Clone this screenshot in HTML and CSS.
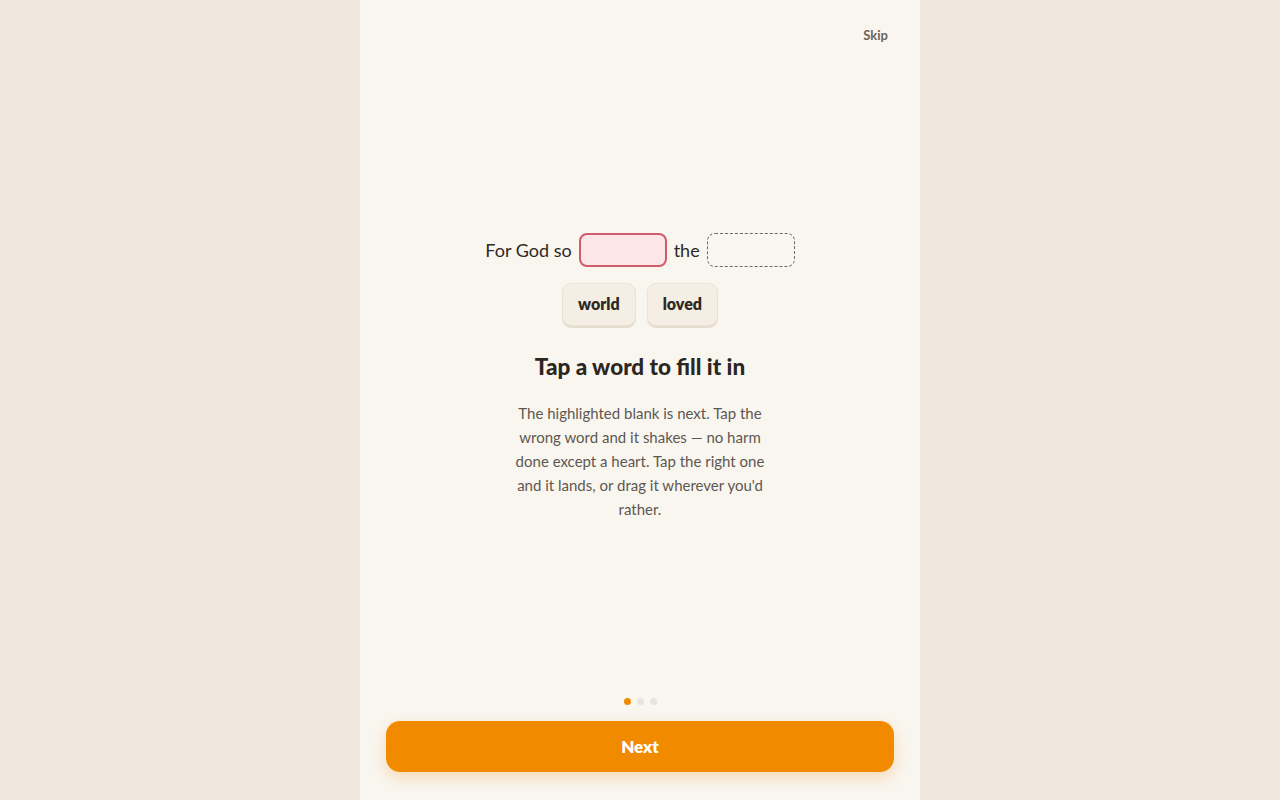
FILE: index.html
```html
<!DOCTYPE html>
<html lang="en">
<head>
<meta charset="utf-8">
<link rel="stylesheet" href="styles.css">
</head>
<body>
<div class="screen">
  <div class="top">
    <button class="skip">Skip</button>
  </div>
  <div class="content">
    <div class="sentence">
      <span class="word">For God so</span>
      <span class="blank active"></span>
      <span class="word">the</span>
      <span class="blank"></span>
    </div>
    <div class="chips">
      <button class="chip">world</button>
      <button class="chip">loved</button>
    </div>
    <h1 class="title">Tap a word to fill it in</h1>
    <p class="desc">The highlighted blank is next. Tap the wrong word and it shakes — no harm done except a heart. Tap the right one and it lands, or drag it wherever you'd rather.</p>
  </div>
  <div class="bottom">
    <div class="dots">
      <span class="dot on"></span>
      <span class="dot"></span>
      <span class="dot"></span>
    </div>
    <button class="next">Next</button>
  </div>
</div>
</body>
</html>
```
FILE: styles.css
```css
* { box-sizing: border-box; }
html, body { margin: 0; height: 100%; }
body {
  background: #f0e8dd;
  font-family: "Lato", "Open Sans", sans-serif;
  display: flex;
  justify-content: center;
}
.screen {
  width: 560px;
  height: 800px;
  background: #f9f6f0;
  display: flex;
  flex-direction: column;
  padding: 0 26px 28px;
}
.top {
  display: flex;
  justify-content: flex-end;
  padding-top: 26px;
  height: 60px;
}
.skip {
  border: none;
  background: none;
  font-family: inherit;
  font-size: 13px;
  font-weight: 700;
  color: #6b645b;
  padding: 0 6px;
  height: 18px;
}
.content {
  flex: 1;
  display: flex;
  flex-direction: column;
  align-items: center;
  padding-top: 173px;
}
.sentence {
  display: flex;
  align-items: center;
  gap: 7px;
  height: 34px;
}
.word {
  font-size: 18px;
  color: #2d2924;
}
.blank {
  width: 88px;
  height: 34px;
  border-radius: 8px;
  border: 1px dashed #6e6962;
}
.blank.active {
  border: 2px solid #cf5c6b;
  background: #fce6e8;
}
.chips {
  display: flex;
  gap: 11px;
  margin-top: 16px;
}
.chip {
  font-family: inherit;
  font-size: 16px;
  font-weight: 800;
  color: #2d2924;
  background: #f4eee4;
  border: 1px solid #ebe3d7;
  border-radius: 9px;
  height: 43px;
  padding: 0 15px 2px;
  box-shadow: 0 2px 0 #e6ddcf;
}
.title {
  margin: 26px 0 0;
  font-size: 22.5px;
  font-weight: 900;
  color: #2b2621;
  line-height: 30px;
}
.desc {
  margin: 19px 0 0;
  width: 270px;
  text-align: center;
  font-size: 15px;
  line-height: 24px;
  color: #5e5850;
}
.bottom {
  display: flex;
  flex-direction: column;
  align-items: center;
}
.dots {
  display: flex;
  gap: 6px;
  margin-bottom: 16px;
}
.dot {
  width: 7px;
  height: 7px;
  border-radius: 50%;
  background: #e8e3dc;
}
.dot.on { background: #f28a00; }
.next {
  width: 100%;
  height: 51px;
  border: none;
  border-radius: 14px;
  background: #f28a00;
  color: #fff;
  font-family: inherit;
  font-size: 17px;
  font-weight: 800;
  box-shadow: 0 6px 16px rgba(242, 138, 0, 0.25);
}
```
